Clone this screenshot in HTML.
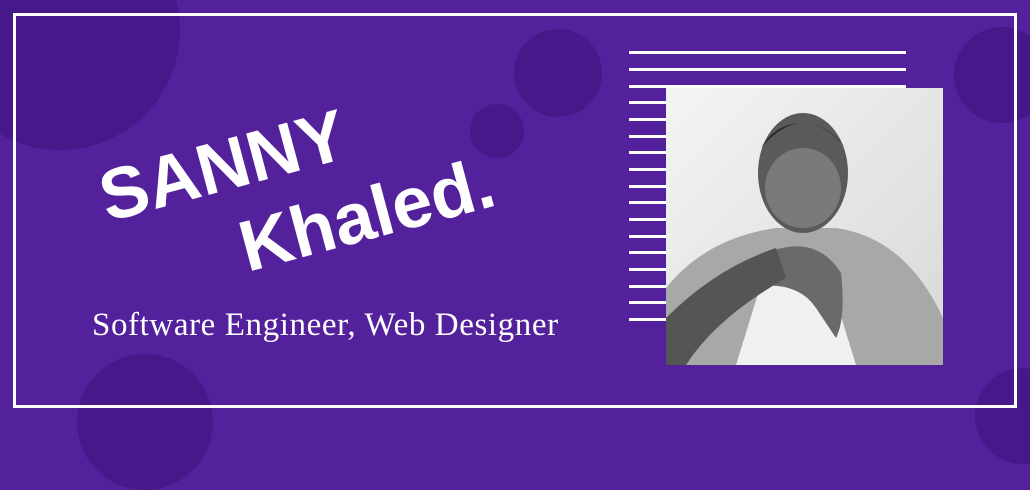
<!DOCTYPE html>
<html><head><style>
html,body{margin:0;padding:0}
body{width:1030px;height:421px;background:#52219b;position:relative;overflow:hidden;font-family:"Liberation Sans",sans-serif}
.c{position:absolute;border-radius:50%;background:#47188a}
.frame{position:absolute;left:13px;top:13px;width:998px;height:389px;border:3px solid #fff}
.l{position:absolute;left:629px;height:3px;background:#fff}
.t{position:absolute;color:#fff;font-weight:bold;transform-origin:0 0;white-space:nowrap;line-height:1}
.sub{position:absolute;left:92px;top:307px;color:#fff;font-family:"Liberation Serif",serif;font-size:33px;letter-spacing:0.6px;line-height:1.1}
</style></head><body>
<div class="c" style="left:-60px;top:-90px;width:240px;height:240px"></div>
<div class="c" style="left:514px;top:29px;width:88px;height:88px"></div>
<div class="c" style="left:470px;top:104px;width:54px;height:54px"></div>
<div class="c" style="left:954px;top:27px;width:96px;height:96px"></div>
<div class="c" style="left:77px;top:354px;width:136px;height:136px"></div>
<div class="c" style="left:975px;top:368px;width:96px;height:96px"></div>
<div class="frame"></div>
<div class="l" style="top:51px;width:277px"></div>
<div class="l" style="top:68px;width:277px"></div>
<div class="l" style="top:85px;width:277px"></div>
<div class="l" style="top:101px;width:40px"></div>
<div class="l" style="top:118px;width:40px"></div>
<div class="l" style="top:135px;width:40px"></div>
<div class="l" style="top:151px;width:40px"></div>
<div class="l" style="top:168px;width:40px"></div>
<div class="l" style="top:185px;width:40px"></div>
<div class="l" style="top:201px;width:40px"></div>
<div class="l" style="top:218px;width:40px"></div>
<div class="l" style="top:235px;width:40px"></div>
<div class="l" style="top:251px;width:40px"></div>
<div class="l" style="top:268px;width:40px"></div>
<div class="l" style="top:285px;width:40px"></div>
<div class="l" style="top:301px;width:40px"></div>
<div class="l" style="top:318px;width:40px"></div>
<svg style="position:absolute;left:666px;top:88px" width="277" height="277" viewBox="0 0 277 277">
<defs><linearGradient id="g" x1="0" y1="0" x2="1" y2="1"><stop offset="0" stop-color="#f4f4f4"/><stop offset="1" stop-color="#d8d8d8"/></linearGradient></defs>
<rect width="277" height="277" fill="url(#g)"/>
<path d="M0 200 Q40 150 110 140 L170 140 Q240 150 277 230 L277 277 L0 277Z" fill="#a8a8a8"/>
<path d="M70 277 L100 180 L160 180 L190 277Z" fill="#f0f0f0"/>
<ellipse cx="137" cy="85" rx="45" ry="60" fill="#5a5a5a"/>
<path d="M95 60 Q137 10 180 60 Q160 35 137 35 Q110 35 95 60Z" fill="#222"/>
<ellipse cx="137" cy="100" rx="38" ry="40" fill="#7a7a7a"/>
<path d="M100 165 Q150 145 175 185 Q180 230 170 250 L150 220 Q130 190 80 200Z" fill="#6a6a6a"/>
<path d="M0 230 Q50 180 110 160 L120 190 Q50 230 20 277 L0 277Z" fill="#555"/>
</svg>
<div class="t" style="left:92px;top:164px;font-size:72px;transform:rotate(-15deg)">SANNY</div>
<div class="t" style="left:232px;top:214px;font-size:72px;transform:rotate(-15deg)">Khaled.</div>
<div class="sub">Software Engineer, Web Designer</div>
</body></html>
